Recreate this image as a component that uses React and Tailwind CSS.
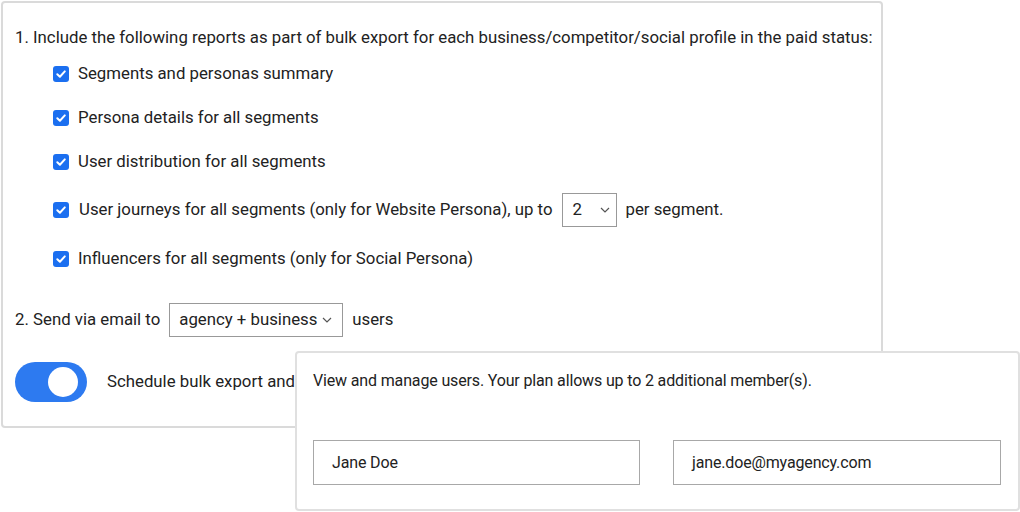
import React from "react";

function Check() {
  return (
    <span className="inline-flex w-[16px] h-[16px] rounded-[3px] bg-[#1b6ff0] items-center justify-center shrink-0">
      <svg width="12" height="12" viewBox="0 0 12 12">
        <path d="M2.3 6.2 L4.9 8.7 L9.8 3.4" fill="none" stroke="white" strokeWidth="2" strokeLinecap="round" strokeLinejoin="round" />
      </svg>
    </span>
  );
}

function Chevron() {
  return (
    <svg width="10" height="6" viewBox="0 0 10 6">
      <path d="M1 1 L5 5 L9 1" fill="none" stroke="#555" strokeWidth="1.2" />
    </svg>
  );
}

function Row({ children, h }) {
  return (
    <div className={`flex items-center gap-[9px] pl-[38px] ${h}`}>
      <Check />
      {children}
    </div>
  );
}

export default function App() {
  return (
    <div className="relative w-[1020px] h-[512px] bg-white overflow-hidden text-[#222] text-[16.8px]" style={{ fontFamily: "Roboto, 'Liberation Sans', sans-serif" }}>
      <div className="ml-[1px] mt-[1px] w-[882px] h-[427px] border-2 border-[#dadada] rounded-[4px] pl-[12px] pt-[22px]">
        <div className="h-[26px] flex items-center">1. Include the following reports as part of bulk export for each business/competitor/social profile in the paid status:</div>
        <div className="mt-[1px]">
          <Row h="h-[44px]"><span>Segments and personas summary</span></Row>
          <Row h="h-[44px]"><span>Persona details for all segments</span></Row>
          <Row h="h-[44px]"><span>User distribution for all segments</span></Row>
          <Row h="h-[52px]">
            <span className="ml-[1px]">User journeys for all segments (only for Website Persona), up to</span>
            <span className="w-[55px] h-[34px] border border-[#999] flex items-center justify-between pl-[10px] pr-[6px]">
              <span>2</span>
              <Chevron />
            </span>
            <span>per segment.</span>
          </Row>
          <Row h="h-[46px]"><span>Influencers for all segments (only for Social Persona)</span></Row>
        </div>
        <div className="mt-[21px] h-[34px] flex items-center gap-[9px]">
          <span>2. Send via email to</span>
          <span className="w-[174px] h-[34px] border border-[#999] flex items-center justify-between pl-[9px] pr-[10px]">
            <span>agency + business</span>
            <Chevron />
          </span>
          <span>users</span>
        </div>
        <div className="mt-[25px] flex items-center gap-[20px]">
          <span className="w-[72px] h-[40px] rounded-full bg-[#2d7af0] flex items-center justify-end pr-[9px]">
            <span className="w-[30px] h-[30px] rounded-full bg-white" />
          </span>
          <span>Schedule bulk export and</span>
        </div>
      </div>

      <div className="absolute left-[295px] top-[351px] w-[725px] h-[160px] bg-white border-2 border-[#e0e0e0] rounded-[4px] pl-[16px] pt-[17px] text-[16px]" style={{ fontFamily: "Roboto, 'Liberation Sans', sans-serif" }}>
        <div className="h-[22px] flex items-center tracking-[-0.15px]">View and manage users. Your plan allows up to 2 additional member(s).</div>
        <div className="mt-[48px] flex gap-[33px]">
          <div className="w-[327px] h-[45px] border border-[#a8a8a8] flex items-center pl-[18px] tracking-[-0.15px]">Jane Doe</div>
          <div className="w-[328px] h-[45px] border border-[#a8a8a8] flex items-center pl-[18px] tracking-[-0.15px]">jane.doe@myagency.com</div>
        </div>
      </div>
    </div>
  );
}
